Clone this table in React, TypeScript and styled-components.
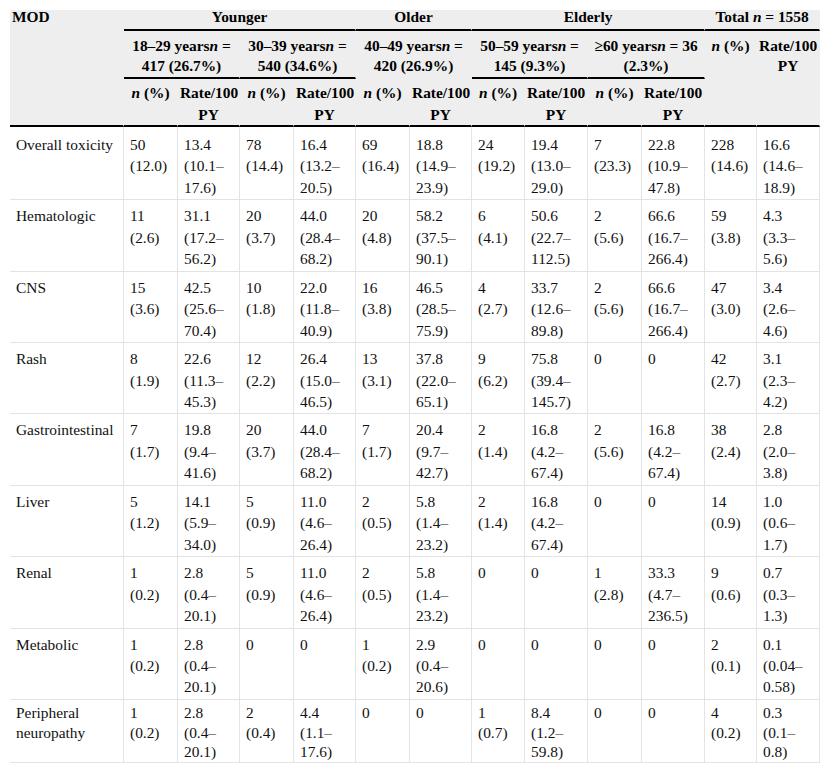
import styled, { createGlobalStyle } from 'styled-components';

const GlobalStyle = createGlobalStyle`
  body {
    margin: 10px;
    background: #fff;
    color: #000;
    font-family: 'Liberation Serif', 'Times New Roman', serif;
  }
`;

const COLS = [114, 54, 62, 54, 62, 54, 62, 53, 63, 54, 63, 52, 63];

type Row = { label: string; values: string[] };

const ROWS: Row[] = [
  {
    label: 'Overall toxicity',
    values: ['50 (12.0)', '13.4 (10.1–17.6)', '78 (14.4)', '16.4 (13.2–20.5)', '69 (16.4)', '18.8 (14.9–23.9)', '24 (19.2)', '19.4 (13.0–29.0)', '7 (23.3)', '22.8 (10.9–47.8)', '228 (14.6)', '16.6 (14.6–18.9)'],
  },
  {
    label: 'Hematologic',
    values: ['11 (2.6)', '31.1 (17.2–56.2)', '20 (3.7)', '44.0 (28.4–68.2)', '20 (4.8)', '58.2 (37.5–90.1)', '6 (4.1)', '50.6 (22.7–112.5)', '2 (5.6)', '66.6 (16.7–266.4)', '59 (3.8)', '4.3 (3.3–5.6)'],
  },
  {
    label: 'CNS',
    values: ['15 (3.6)', '42.5 (25.6–70.4)', '10 (1.8)', '22.0 (11.8–40.9)', '16 (3.8)', '46.5 (28.5–75.9)', '4 (2.7)', '33.7 (12.6–89.8)', '2 (5.6)', '66.6 (16.7–266.4)', '47 (3.0)', '3.4 (2.6–4.6)'],
  },
  {
    label: 'Rash',
    values: ['8 (1.9)', '22.6 (11.3–45.3)', '12 (2.2)', '26.4 (15.0–46.5)', '13 (3.1)', '37.8 (22.0–65.1)', '9 (6.2)', '75.8 (39.4–145.7)', '0', '0', '42 (2.7)', '3.1 (2.3–4.2)'],
  },
  {
    label: 'Gastrointestinal',
    values: ['7 (1.7)', '19.8 (9.4–41.6)', '20 (3.7)', '44.0 (28.4–68.2)', '7 (1.7)', '20.4 (9.7–42.7)', '2 (1.4)', '16.8 (4.2–67.4)', '2 (5.6)', '16.8 (4.2–67.4)', '38 (2.4)', '2.8 (2.0–3.8)'],
  },
  {
    label: 'Liver',
    values: ['5 (1.2)', '14.1 (5.9–34.0)', '5 (0.9)', '11.0 (4.6–26.4)', '2 (0.5)', '5.8 (1.4–23.2)', '2 (1.4)', '16.8 (4.2–67.4)', '0', '0', '14 (0.9)', '1.0 (0.6–1.7)'],
  },
  {
    label: 'Renal',
    values: ['1 (0.2)', '2.8 (0.4–20.1)', '5 (0.9)', '11.0 (4.6–26.4)', '2 (0.5)', '5.8 (1.4–23.2)', '0', '0', '1 (2.8)', '33.3 (4.7–236.5)', '9 (0.6)', '0.7 (0.3–1.3)'],
  },
  {
    label: 'Metabolic',
    values: ['1 (0.2)', '2.8 (0.4–20.1)', '0', '0', '1 (0.2)', '2.9 (0.4–20.6)', '0', '0', '0', '0', '2 (0.1)', '0.1 (0.04–0.58)'],
  },
  {
    label: 'Peripheral neuropathy',
    values: ['1 (0.2)', '2.8 (0.4–20.1)', '2 (0.4)', '4.4 (1.1–17.6)', '0', '0', '1 (0.7)', '8.4 (1.2–59.8)', '0', '0', '4 (0.2)', '0.3 (0.1–0.8)'],
  },
];

// "13.4 (10.1–17.6)" -> three lines, as the narrow columns wrap them
const split = (v: string) => v.replace(' ', '\n').replace('–', '–\n');

const GROUPS = [
  { range: '18–29 years', n: '417 (26.7%)', rule: true },
  { range: '30–39 years', n: '540 (34.6%)', rule: true },
  { range: '40–49 years', n: '420 (26.9%)', rule: false },
  { range: '50–59 years', n: '145 (9.3%)', rule: true },
  { range: '≥60 years', n: '36 (2.3%)', rule: true },
];

const App: React.FC = () => {
  return (
    <>
      <GlobalStyle />
      <Table>
        <colgroup>
          {COLS.map((w, i) => (
            <Col key={i} $w={w} />
          ))}
        </colgroup>
        <thead>
          <tr>
            <Th $tier={1} $align="left" rowSpan={3}>
              MOD
            </Th>
            <Th $tier={1} colSpan={4}>Younger</Th>
            <Th $tier={1} colSpan={2}>Older</Th>
            <Th $tier={1} colSpan={4}>Elderly</Th>
            <Th $tier={1} colSpan={2}>
              Total <Ital>n</Ital> = 1558
            </Th>
          </tr>
          <tr>
            {GROUPS.map((g) => (
              <Th key={g.range} $tier={2} $rule={g.rule} colSpan={2}>
                {g.range}
                <Ital>n</Ital> = {g.n}
              </Th>
            ))}
            <Th $tier={2} rowSpan={2}>
              <Ital>n</Ital> (%)
            </Th>
            <Th $tier={2} rowSpan={2}>
              Rate/100 PY
            </Th>
          </tr>
          <tr>
            {GROUPS.map((g) => [
              <Th key={g.range + 'n'} $tier={3}>
                <Ital>n</Ital> (%)
              </Th>,
              <Th key={g.range + 'r'} $tier={3}>
                Rate/100 PY
              </Th>,
            ])}
          </tr>
        </thead>
        <tbody>
          {ROWS.map((row) => (
            <tr key={row.label}>
              <Td>{row.label}</Td>
              {row.values.map((v, i) => (
                <Td key={i}>{split(v)}</Td>
              ))}
            </tr>
          ))}
        </tbody>
      </Table>
    </>
  );
};

const Table = styled.table`
  width: 810px;
  table-layout: fixed;
  border-collapse: separate;
  border-spacing: 0;
  font-size: 15.4px;
`;
const Col = styled.col<{ $w: number }>`
  width: ${({ $w }) => $w}px;
`;
const TIER = {
  1: { padding: '0 2px 5px', lineHeight: '14px' },
  2: { padding: '5px 2px 1px', lineHeight: '20px' },
  3: { padding: '3px 2px 0', lineHeight: '21.5px' },
};
const Th = styled.th<{ $tier: 1 | 2 | 3; $rule?: boolean; $align?: 'left' | 'center' }>`
  background: #eeeeee;
  font-weight: bold;
  text-align: ${({ $align }) => $align ?? 'center'};
  vertical-align: top;
  padding: ${({ $tier }) => TIER[$tier].padding};
  line-height: ${({ $tier }) => TIER[$tier].lineHeight};
  border-right: 1px solid transparent;
  border-bottom: 2px solid ${({ $rule }) => ($rule === false ? 'transparent' : '#000')};
`;
const Ital = styled.i`
  font-style: italic;
`;
const Td = styled.td`
  vertical-align: top;
  text-align: left;
  padding: 5px 6px 1px;
  line-height: 21.45px;
  white-space: pre-line;
  color: #111;
  border-right: 1px solid #e3e3e3;
  border-bottom: 1px solid #e3e3e3;
  tbody tr:first-child & {
    padding-top: 7px;
  }
  tbody tr:last-child & {
    padding: 3px 6px 0;
    line-height: 19.7px;
  }
`;

export default App;
